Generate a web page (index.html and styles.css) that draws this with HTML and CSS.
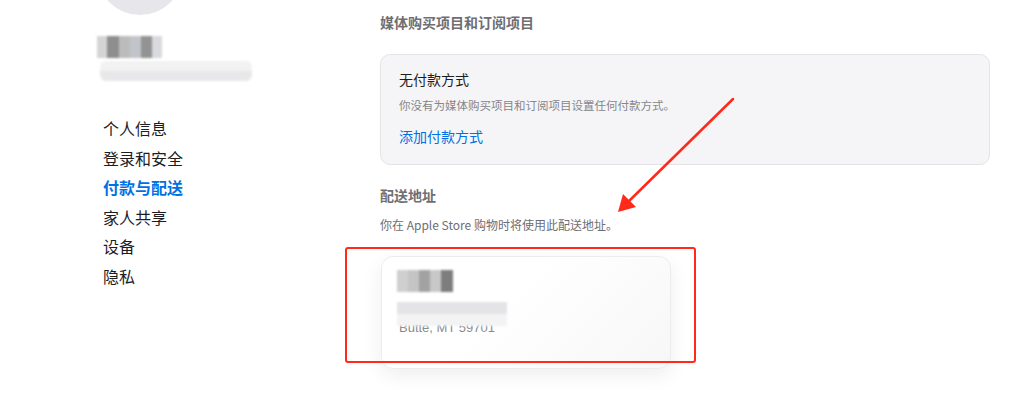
FILE: index.html
```html
<!DOCTYPE html>
<html lang="zh">
<head>
<meta charset="utf-8">
<link rel="stylesheet" href="styles.css">
</head>
<body>
<div class="page">
  <aside class="side">
    <div class="avatar"></div>
    <div class="pix name-pix">
      <span class="px p1"></span><span class="px p2"></span><span class="px p3"></span><span class="px p4"></span><span class="px p5"></span><span class="px p6"></span>
    </div>
    <div class="mail-pix"></div>
    <nav class="nav">
      <a class="nav-item">个人信息</a>
      <a class="nav-item">登录和安全</a>
      <a class="nav-item active">付款与配送</a>
      <a class="nav-item">家人共享</a>
      <a class="nav-item">设备</a>
      <a class="nav-item">隐私</a>
    </nav>
  </aside>
  <main class="main">
    <h2 class="sec-title">媒体购买项目和订阅项目</h2>
    <section class="pay-card">
      <div class="pay-title">无付款方式</div>
      <div class="pay-desc">你没有为媒体购买项目和订阅项目设置任何付款方式。</div>
      <a class="pay-link">添加付款方式</a>
    </section>
    <h2 class="sec-title ship-title">配送地址</h2>
    <div class="ship-desc">你在 Apple Store 购物时将使用此配送地址。</div>
    <div class="addr-wrap">
      <section class="addr-card">
        <div class="addr-name">
          <span class="px q1"></span><span class="px q2"></span><span class="px q3"></span><span class="px q4"></span><span class="px q5"></span>
        </div>
        <div class="addr-line"></div>
        <div class="addr-city">Butte, MT 59701</div>
      </section>
      <div class="red-box"></div>
    </div>
  </main>
  <svg class="arrow" width="140" height="130" viewBox="0 0 140 130">
    <line x1="124" y1="4" x2="18" y2="108" stroke="#ff2a1a" stroke-width="2.5" stroke-linecap="round"/>
    <polygon points="9,117 14,99 27,112" fill="#ff2a1a"/>
  </svg>
</div>
</body>
</html>
```
FILE: styles.css
```css
* { box-sizing: border-box; }
html, body { margin: 0; padding: 0; background: #fff; }
body {
  font-family: "Noto Sans CJK SC", "Noto Sans", "Liberation Sans", sans-serif;
  color: #1d1d1f;
  width: 1024px;
  height: 399px;
  overflow: hidden;
}
.page {
  position: relative;
  display: flex;
  width: 1024px;
  height: 399px;
}
.side {
  width: 380px;
  flex: none;
  padding-left: 97px;
  position: relative;
}
.avatar {
  position: absolute;
  left: 97px;
  top: -71px;
  width: 86px;
  height: 86px;
  border-radius: 50%;
  background: #e6e6eb;
}
.pix { display: flex; }
.name-pix {
  margin-top: 36px;
  height: 22px;
  width: 70px;
  filter: blur(0.8px);
}
.px { display: block; height: 100%; }
.p1 { width: 10px; background: #d4d4d4; }
.p2 { width: 12px; background: #8e8e8e; }
.p3 { width: 11px; background: #bcbcbc; }
.p4 { width: 11px; background: #c1c4c8; }
.p5 { width: 11px; background: #939393; }
.p6 { width: 10px; background: #d8dade; }
.mail-pix {
  margin-top: 3px;
  margin-left: 3px;
  width: 152px;
  height: 20px;
  background: linear-gradient(to bottom, #f2f2f3 50%, #e8e8ea 50%);
  filter: blur(1px);
  border-radius: 6px;
}
.nav {
  margin-top: 33px;
  padding-left: 6px;
  display: flex;
  flex-direction: column;
}
.nav-item {
  font-size: 16px;
  line-height: 29.6px;
  color: #1d1d1f;
}
.nav-item.active { color: #0071e3; font-weight: 700; }
.main {
  flex: 1;
  padding-top: 11px;
  padding-right: 34px;
}
.sec-title {
  margin: 0;
  font-size: 14px;
  line-height: 22px;
  font-weight: 600;
  color: #6e6e73;
}
.pay-card {
  margin-top: 21px;
  height: 111px;
  border: 1px solid #e4e4e7;
  border-radius: 10px;
  background: #f5f5f7;
  padding: 13px 18px 0;
}
.pay-title { font-size: 14px; line-height: 22px; color: #1d1d1f; }
.pay-desc { margin-top: 6px; font-size: 11.5px; line-height: 18px; color: #86868b; }
.pay-link { display: block; margin-top: 11px; font-size: 14px; line-height: 22px; color: #0071e3; }
.ship-title { margin-top: 19px; }
.ship-desc { margin-top: 10px; font-size: 12px; line-height: 18px; color: #6e6e73; }
.addr-wrap { position: relative; margin-top: 22px; }
.addr-card {
  width: 290px;
  height: 113px;
  margin-left: 1px;
  border: 1px solid #ececee;
  border-radius: 12px;
  background: linear-gradient(135deg, #ffffff 40%, #f7f7f8);
  box-shadow: 0 6px 20px rgba(0,0,0,0.07);
  padding: 13px 0 0 15px;
}
.addr-name { display: flex; height: 22px; width: 56px; filter: blur(0.8px); }
.q1 { width: 11px; background: #cfcfcf; }
.q2 { width: 11px; background: #c4c4c4; }
.q3 { width: 11px; background: #a2a2a2; }
.q4 { width: 11px; background: #c8c8c8; }
.q5 { width: 12px; background: #7d7d7d; }
.addr-line {
  margin-top: 10px;
  width: 110px;
  height: 24px;
  background: linear-gradient(to bottom, #e4e4e6 50%, #f3f3f4 50%);
  filter: blur(1px);
}
.addr-city {
  margin-top: -6px;
  margin-left: 2px;
  font-family: "Liberation Sans", sans-serif;
  font-size: 13px;
  line-height: 16px;
  color: #8a8a8e;
}
.red-box {
  position: absolute;
  left: -35px;
  top: -9px;
  width: 351px;
  height: 116px;
  border: 2px solid #ff2a1a;
  border-radius: 3px;
}
.arrow {
  position: absolute;
  left: 609px;
  top: 95px;
}
```
